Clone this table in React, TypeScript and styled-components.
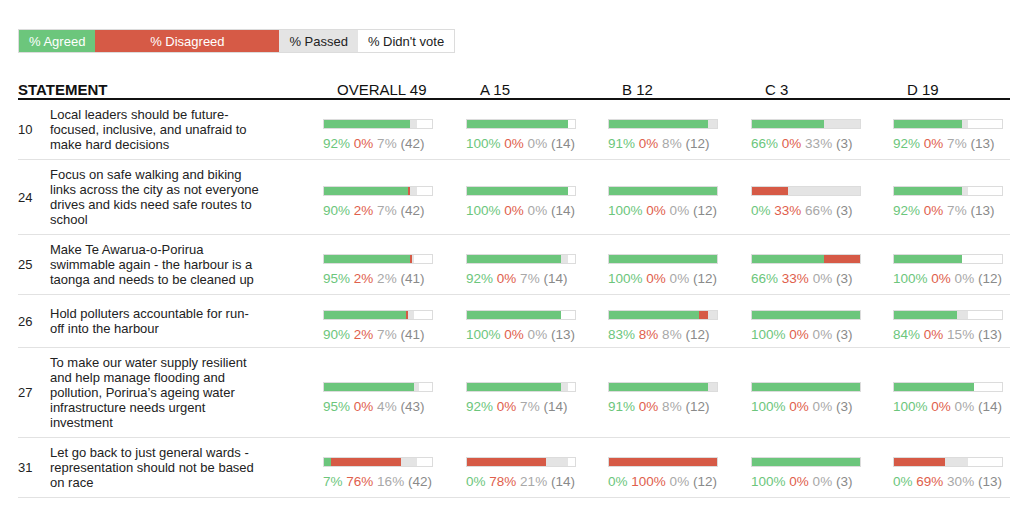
import styled, { createGlobalStyle } from "styled-components";

const GREEN = "#6cc67c";
const RED = "#d65a46";
const PASS = "#e4e4e4";

const GlobalStyle = createGlobalStyle`
  body {
    margin: 0;
    background: #fff;
    font-family: "Liberation Sans", Arial, Helvetica, sans-serif;
    color: #222;
  }
`;

const Page = styled.div`
  padding: 29px 14px 0 18px;
`;

const Legend = styled.div`
  display: inline-flex;
  border: 1px solid #dcdcdc;
  font-size: 13px;
  line-height: 15px;
`;

const LegendItem = styled.div<{ $bg: string; $fg: string; $w?: number }>`
  background: ${(p) => p.$bg};
  color: ${(p) => p.$fg};
  padding: 3.5px 10px;
  text-align: center;
  width: ${(p) => (p.$w ? `${p.$w}px` : "auto")};
  box-sizing: border-box;
`;

const Columns = "32px 273px 143px 142px 143px 142px 117px";

const HeaderRow = styled.div`
  display: grid;
  grid-template-columns: ${Columns};
  margin-top: 28px;
  border-bottom: 2px solid #111;
  font-size: 15px;
  line-height: 17px;
  color: #111;
`;

const StatementHead = styled.div`
  grid-column: span 2;
  font-weight: bold;
`;

const GroupHead = styled.div`
  padding-left: 14px;
`;

const Row = styled.div`
  display: grid;
  grid-template-columns: ${Columns};
  align-items: center;
  border-bottom: 1px solid #e2e2e2;
  font-size: 13px;
  line-height: 15px;
`;

const Num = styled.div`
  color: #222;
`;

const Statement = styled.div`
  width: 211px;
  padding: 7px 0;
  color: #222;
`;

const Cell = styled.div`
  padding: 7px 0 5px;
`;

const Bar = styled.div`
  display: flex;
  width: 108px;
  height: 8px;
  margin-top: 8px;
  border: 1px solid #dcdcdc;
  background: #fff;
`;

const Seg = styled.div<{ $c: string }>`
  background: ${(p) => p.$c};
  height: 100%;
`;

const Stats = styled.div`
  margin-top: 7px;
  font-size: 13.5px;
  line-height: 15px;
  white-space: nowrap;
`;

const Pct = styled.span<{ $c: string }>`
  color: ${(p) => p.$c};
`;

const groups = [
  { label: "OVERALL", n: 49 },
  { label: "A", n: 15 },
  { label: "B", n: 12 },
  { label: "C", n: 3 },
  { label: "D", n: 19 },
];

type Votes = [number, number, number];

const rows: { id: number; text: string; votes: Votes[] }[] = [
  {
    id: 10,
    text: "Local leaders should be future-focused, inclusive, and unafraid to make hard decisions",
    votes: [[39, 0, 3], [14, 0, 0], [11, 0, 1], [2, 0, 1], [12, 0, 1]],
  },
  {
    id: 24,
    text: "Focus on safe walking and biking links across the city as not everyone drives and kids need safe routes to school",
    votes: [[38, 1, 3], [14, 0, 0], [12, 0, 0], [0, 1, 2], [12, 0, 1]],
  },
  {
    id: 25,
    text: "Make Te Awarua-o-Porirua swimmable again - the harbour is a taonga and needs to be cleaned up",
    votes: [[39, 1, 1], [13, 0, 1], [12, 0, 0], [2, 1, 0], [12, 0, 0]],
  },
  {
    id: 26,
    text: "Hold polluters accountable for run-off into the harbour",
    votes: [[37, 1, 3], [13, 0, 0], [10, 1, 1], [3, 0, 0], [11, 0, 2]],
  },
  {
    id: 27,
    text: "To make our water supply resilient and help manage flooding and pollution, Porirua’s ageing water infrastructure needs urgent investment",
    votes: [[41, 0, 2], [13, 0, 1], [11, 0, 1], [3, 0, 0], [14, 0, 0]],
  },
  {
    id: 31,
    text: "Let go back to just general wards - representation should not be based on race",
    votes: [[3, 32, 7], [0, 11, 3], [0, 12, 0], [3, 0, 0], [0, 9, 4]],
  },
];

const VoteCell = ({ votes, n }: { votes: Votes; n: number }) => {
  const [a, d, p] = votes;
  const total = a + d + p;
  const pct = (c: number) => Math.floor((c / total) * 100);
  return (
    <Cell>
      <Bar>
        <Seg $c={GREEN} style={{ width: `${(a / n) * 100}%` }} />
        <Seg $c={RED} style={{ width: `${(d / n) * 100}%` }} />
        <Seg $c={PASS} style={{ width: `${(p / n) * 100}%` }} />
      </Bar>
      <Stats>
        <Pct $c="#6cc67c">{pct(a)}%</Pct> <Pct $c="#e0604c">{pct(d)}%</Pct>{" "}
        <Pct $c="#a8a8a8">{pct(p)}%</Pct> <Pct $c="#8a8a8a">({total})</Pct>
      </Stats>
    </Cell>
  );
};

const App = () => {
  return (
    <Page>
      <GlobalStyle />
      <Legend>
        <LegendItem $bg={GREEN} $fg="#fff">% Agreed</LegendItem>
        <LegendItem $bg={RED} $fg="#fff" $w={184}>% Disagreed</LegendItem>
        <LegendItem $bg={PASS} $fg="#222">% Passed</LegendItem>
        <LegendItem $bg="#fff" $fg="#222">% Didn't vote</LegendItem>
      </Legend>
      <HeaderRow>
        <StatementHead>STATEMENT</StatementHead>
        {groups.map((g) => (
          <GroupHead key={g.label}>
            {g.label} {g.n}
          </GroupHead>
        ))}
      </HeaderRow>
      {rows.map((r) => (
        <Row key={r.id}>
          <Num>{r.id}</Num>
          <Statement>{r.text}</Statement>
          {r.votes.map((v, i) => (
            <VoteCell key={i} votes={v} n={groups[i].n} />
          ))}
        </Row>
      ))}
    </Page>
  );
};

export default App;
